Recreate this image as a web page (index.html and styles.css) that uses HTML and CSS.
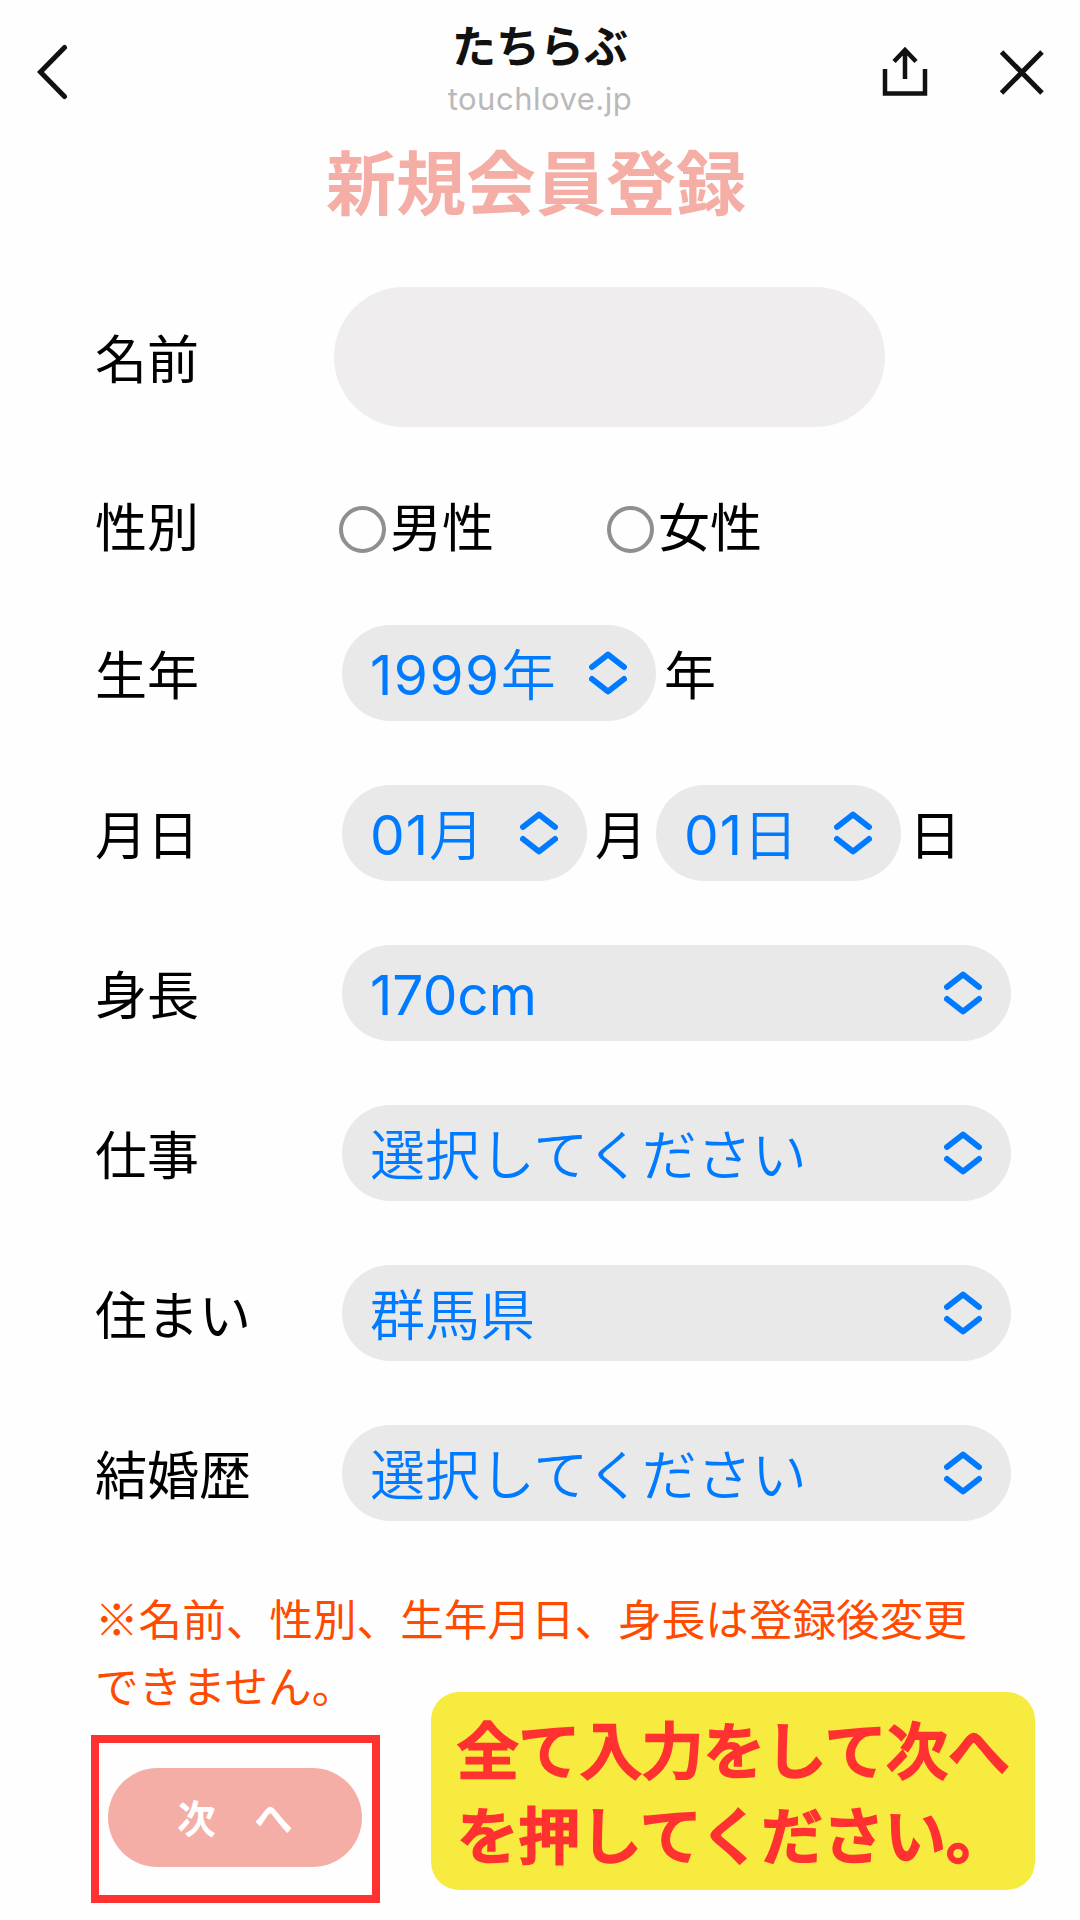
FILE: index.html
```
<!DOCTYPE html>
<html lang="ja">
<head>
    <meta charset="UTF-8">
    <title>たちらぶ</title>
    <link rel="stylesheet" href="styles.css">
</head>
<body>
    <svg class="defs" width="0" height="0">
        <symbol id="updown" viewBox="0 0 38 44">
            <path d="M3 16 L19 3.5 L35 16 M3 28 L19 40.5 L35 28"/>
        </symbol>
    </svg>

    <header class="topbar">
        <svg class="back" viewBox="0 0 32 56"><path d="M28.5 3.5 L4.5 28 L28.5 52.5"/></svg>
        <div class="site">
            <p class="site-name">たちらぶ</p>
            <p class="site-url">touchlove.jp</p>
        </div>
        <svg class="share" viewBox="0 0 46 52"><path d="M3 23 V47.5 H43 V23 M23 33 V5 M12 15.5 L23 4 L34 15.5"/></svg>
        <svg class="close" viewBox="0 0 44 46"><path d="M1.5 3 L42 44 M42 3 L1.5 44"/></svg>
    </header>

    <h1>新規会員登録</h1>

    <form class="form">
        <div class="row row-name">
            <label for="name">名前</label>
            <input class="name-input" type="text" id="name" name="name">
        </div>
        <div class="row row-gender">
            <span class="label">性別</span>
            <label class="radio"><input type="radio" name="gender" value="m">男性</label>
            <label class="radio"><input type="radio" name="gender" value="f">女性</label>
        </div>
        <div class="row">
            <span class="label">生年</span>
            <div class="select year"><span>1999年</span><svg><use href="#updown"/></svg></div>
            <span class="unit">年</span>
        </div>
        <div class="row">
            <span class="label">月日</span>
            <div class="select short"><span>01月</span><svg><use href="#updown"/></svg></div>
            <span class="unit">月</span>
            <div class="select short"><span>01日</span><svg><use href="#updown"/></svg></div>
            <span class="unit">日</span>
        </div>
        <div class="row">
            <span class="label">身長</span>
            <div class="select wide"><span>170cm</span><svg><use href="#updown"/></svg></div>
        </div>
        <div class="row">
            <span class="label">仕事</span>
            <div class="select wide"><span>選択してください</span><svg><use href="#updown"/></svg></div>
        </div>
        <div class="row">
            <span class="label">住まい</span>
            <div class="select wide"><span>群馬県</span><svg><use href="#updown"/></svg></div>
        </div>
        <div class="row">
            <span class="label">結婚歴</span>
            <div class="select wide"><span>選択してください</span><svg><use href="#updown"/></svg></div>
        </div>

        <p class="note">※名前、性別、生年月日、身長は登録後変更<br>できません。</p>

        <div class="actions">
            <div class="frame"><button type="button">次　へ</button></div>
            <p class="callout">全て入力をして次へ<br>を押してください。</p>
        </div>
    </form>
</body>
</html>
```
FILE: styles.css
```
* {
    box-sizing: border-box;
}
body {
    margin: 0;
    width: 1080px;
    height: 1920px;
    overflow: hidden;
    background-color: #fefefe;
    color: #000;
    font-family: Inter, "Noto Sans CJK JP", sans-serif;
}
p, h1 {
    margin: 0;
}
svg {
    fill: none;
    stroke: #111;
    stroke-width: 5;
}
.defs {
    display: block;
}

/* top bar */
.topbar {
    display: grid;
    grid-template-columns: 36px 32px 814px 46px 72px 44px;
    height: 139px;
}
.back {
    grid-column: 2;
    width: 32px;
    height: 56px;
    margin-top: 44px;
    stroke-linecap: round;
}
.site {
    grid-column: 3;
    padding: 19px 0 0 130px;
    text-align: center;
}
.site-name {
    color: #111;
    font-size: 44px;
    font-weight: 700;
    line-height: 56px;
    width: 684px;
}
.site-url {
    width: 684px;
    color: #b9b9b9;
    font-size: 31px;
    letter-spacing: 0.5px;
    line-height: 48px;
}
.share {
    grid-column: 4;
    width: 46px;
    height: 52px;
    margin-top: 46px;
    stroke-width: 4.5;
}
.close {
    grid-column: 6;
    width: 44px;
    height: 46px;
    margin-top: 49px;
}

h1 {
    width: 1072px;
    height: 148px;
    color: #f5aea5;
    font-size: 70px;
    font-weight: 700;
    line-height: 92px;
    text-align: center;
}

/* form */
.row {
    display: flex;
    align-items: center;
    height: 96px;
    margin-bottom: 64px;
    padding-left: 95px;
    font-size: 52px;
    line-height: 60px;
}
.row > :first-child {
    width: 247px;
    padding-top: 8px;
}
.row-name {
    height: 140px;
    margin-bottom: 54px;
}
.row-name > :first-child {
    width: 239px;
}
.name-input {
    width: 551px;
    height: 140px;
    border: none;
    border-radius: 70px;
    background-color: #efedee;
}
.row-gender {
    margin-bottom: 48px;
}
.row-gender > :first-child {
    width: 244px;
    padding-top: 0;
}
.radio {
    display: flex;
    align-items: center;
    width: 268px;
}
.radio input {
    appearance: none;
    width: 47px;
    height: 47px;
    margin: 0 4px 0 0;
    border: 4px solid #8e8e93;
    border-radius: 50%;
}
.select {
    display: flex;
    align-items: center;
    justify-content: space-between;
    height: 96px;
    padding: 0 29px 0 28px;
    border-radius: 48px;
    background-color: #e9e9e9;
    color: #007aff;
    font-family: Inter, "Noto Sans CJK JP DemiLight", "Noto Sans CJK JP", sans-serif;
    font-size: 55px;
    white-space: nowrap;
}
.select span {
    padding-top: 3px;
}
.select svg {
    width: 38px;
    height: 44px;
    stroke: #007aff;
    stroke-width: 6;
    stroke-linecap: round;
    stroke-linejoin: round;
}
.year {
    width: 314px;
    letter-spacing: 1.5px;
}
.short {
    width: 245px;
    letter-spacing: 1px;
}
.wide {
    width: 669px;
}
.unit {
    width: 69px;
    padding: 8px 0 0 8px;
}

.note {
    margin-top: -1px;
    padding-left: 95px;
    color: #ff4b00;
    font-family: "Noto Sans CJK JP", sans-serif;
    font-size: 43.6px;
    line-height: 67px;
}

.actions {
    display: flex;
    align-items: flex-start;
    margin-top: -26px;
    padding-left: 91px;
}
.frame {
    width: 289px;
    height: 168px;
    margin: 43px 51px 0 0;
    padding: 25px 9px;
    border: 8px solid #ff3131;
}
button {
    width: 254px;
    height: 99px;
    padding: 0 0 4px;
    border: none;
    border-radius: 50px;
    background-color: #f5aea5;
    color: #fff;
    font-family: inherit;
    font-size: 38.5px;
    font-weight: 700;
}
.callout {
    width: 604px;
    height: 198px;
    padding: 17px 0 0 26px;
    border-radius: 28px;
    background-color: #f7eb40;
    color: #ff3131;
    font-size: 61.6px;
    font-weight: 500;
    line-height: 85px;
    white-space: nowrap;
    -webkit-text-stroke: 2.5px #ff3131;
}
```
